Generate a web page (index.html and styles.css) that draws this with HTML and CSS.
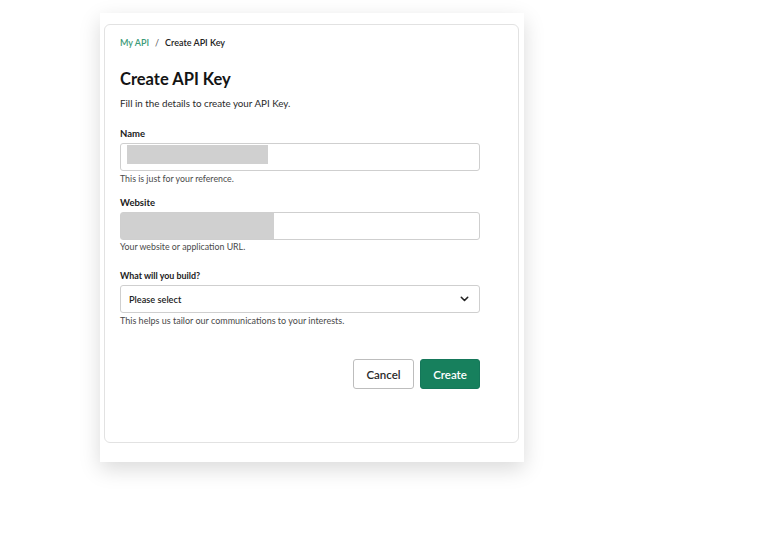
FILE: index.html
```html
<!DOCTYPE html>
<html>
<head>
<meta charset="utf-8">
<link rel="stylesheet" href="styles.css">
</head>
<body>
<div class="panel">
  <div class="card">
    <nav class="crumbs"><a class="crumb-link">My API</a><span class="sep">/</span><span class="crumb-cur">Create API Key</span></nav>
    <h1 class="title">Create API Key</h1>
    <p class="subtitle">Fill in the details to create your API Key.</p>

    <div class="field field-name">
      <label class="label">Name</label>
      <div class="input"><span class="redact redact-name"></span></div>
      <p class="help">This is just for your reference.</p>
    </div>

    <div class="field field-web">
      <label class="label">Website</label>
      <div class="input"><span class="redact redact-web"></span></div>
      <p class="help">Your website or application URL.</p>
    </div>

    <div class="field field-build">
      <label class="label">What will you build?</label>
      <div class="input select"><span class="select-text">Please select</span>
        <svg class="chev" width="9" height="6" viewBox="0 0 9 6"><path d="M1.3 1.3 L4.5 4.5 L7.7 1.3" fill="none" stroke="#222" stroke-width="1.6" stroke-linecap="round" stroke-linejoin="round"/></svg>
      </div>
      <p class="help help-long">This helps us tailor our communications to your interests.</p>
    </div>

    <div class="actions">
      <button class="btn btn-cancel">Cancel</button>
      <button class="btn btn-create">Create</button>
    </div>
  </div>
</div>
</body>
</html>
```
FILE: styles.css
```css
* { box-sizing: border-box; }
html, body { margin: 0; padding: 0; background: #fff; }
body {
  font-family: Lato, "Liberation Sans", sans-serif;
  color: #1d1d1d;
  width: 759px;
  height: 559px;
  overflow: hidden;
}
.panel {
  margin: 13px 0 0 100px;
  width: 424px;
  padding: 11px 5px 19px 4px;
  background: #fff;
  box-shadow: 0 7px 20px rgba(0,0,0,0.15);
}
.card {
  border: 1px solid #e2e2e2;
  border-radius: 6px;
  padding: 12px 38px 53px 15px;
}
.crumbs {
  display: flex;
  align-items: center;
  font-size: 9px;
  line-height: 12px;
  font-weight: 600;
}
.crumb-link { color: #3b9a78; }
.sep { color: #555; margin: 0 6px; font-weight: 400; }
.crumb-cur { color: #222; }
.title {
  margin: 19px 0 0;
  font-size: 16.5px;
  line-height: 22px;
  font-weight: 700;
  color: #141414;
}
.subtitle {
  margin: 7px 0 0;
  font-size: 9.8px;
  line-height: 13px;
  color: #2a2a2a;
}
.field { display: flex; flex-direction: column; }
.field-name { margin-top: 17px; }
.field-web { margin-top: 12px; }
.field-build { margin-top: 17px; }
.label {
  font-size: 9.5px;
  line-height: 13px;
  font-weight: 700;
  color: #1b1b1b;
  margin-bottom: 3px;
}
.field-build .label { font-size: 8.9px; }
.input {
  height: 28px;
  width: 360px;
  border: 1px solid #cfcfcf;
  border-radius: 3px;
  background: #fff;
  display: flex;
  align-items: center;
  position: relative;
}
.redact { display: block; background: #d0d0d0; }
.redact-name { margin-left: 6px; width: 141px; height: 19px; align-self: flex-start; margin-top: 1px; }
.redact-web { margin-left: 0; width: 153px; height: 26px; }
.select { justify-content: space-between; padding: 0 10px 0 8px; }
.select-text { font-size: 9.2px; font-weight: 600; color: #222; }
.chev { display: block; }
.help {
  margin: 1.5px 0 0;
  font-size: 8.8px;
  line-height: 11px;
  color: #4a4a4a;
}
.help-long { font-size: 9px; }
.actions {
  display: flex;
  justify-content: flex-end;
  gap: 6px;
  margin-top: 33.5px;
}
.btn {
  height: 30px;
  width: 61px;
  border-radius: 3px;
  font-family: inherit;
  font-size: 11.5px;
  font-weight: 600;
  cursor: pointer;
}
.btn-cancel {
  background: #fff;
  border: 1px solid #bdbdbd;
  color: #2a2a2a;
}
.btn-create {
  width: 60px;
  background: #17805d;
  border: 1px solid #15775a;
  color: #fff;
}
```
